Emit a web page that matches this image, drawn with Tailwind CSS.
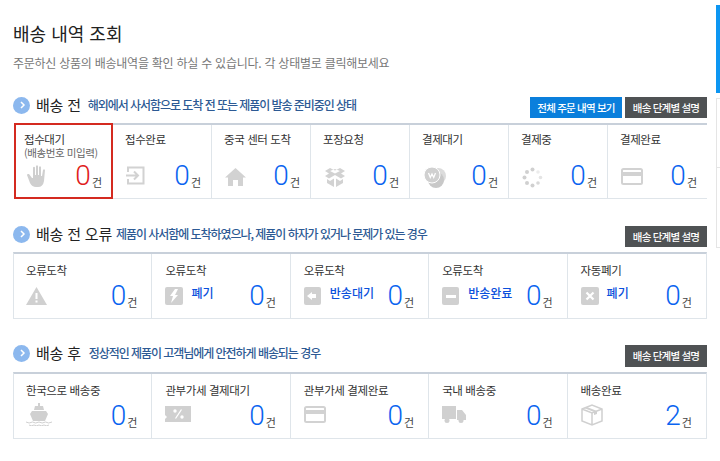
<!DOCTYPE html>
<html lang="ko"><head><meta charset="utf-8"><title>배송 내역 조회</title>
<script src="https://cdn.jsdelivr.net/npm/@tailwindcss/browser@4"></script>
</head>
<body class="bg-white overflow-hidden">
<div class="relative w-[720px] h-[461px] overflow-hidden font-['Noto_Sans_CJK_KR','Noto_Sans',sans-serif] text-[#333]">
  <div class="absolute right-0 top-[5px] w-[4px] h-[88px] bg-[#0d96f2]"></div>
  <div class="absolute right-0 top-[98px] w-[4px] h-[70px] border-l border-y border-[#e5e5e5]"></div>
  <div class="absolute right-0 top-[168px] w-[4px] h-[80px] border-l border-b border-[#e5e5e5]"></div>
  <main class="w-[707px] pl-[13px] flex flex-col">
    <h1 class="mt-[20px] text-[18px] leading-[26px] font-normal text-[#222]">배송 내역 조회</h1>
    <p class="mt-[8px] text-[12px] leading-[18px] tracking-[-0.25px] text-[#777]">주문하신 상품의 배송내역을 확인 하실 수 있습니다. 각 상태별로 클릭해보세요</p>

    <div class="mt-[21px] flex items-center h-[24px]">
      <span class="w-[17px] h-[17px] rounded-full bg-[#8cb8ee] flex items-center justify-center"><svg width="8" height="8" viewBox="0 0 8 8" fill="none" stroke="#fff" stroke-width="1.5"><path d="M3 1l3 3-3 3"/></svg></span>
      <span class="ml-[6px] text-[15px] tracking-[-0.2px] text-[#222]">배송 전</span>
      <span class="ml-[7px] text-[12px] font-medium tracking-[-1.05px] text-[#2d5a94]">해외에서 사서함으로 도착 전 또는 제품이 발송 준비중인 상태</span>
      <span class="ml-auto mt-[5px] h-[21px] w-[92px] bg-[#0a7fdc] text-white text-[10.5px] font-medium tracking-[-0.8px] flex items-center justify-center">전체 주문 내역 보기</span>
      <span class="ml-[3px] mt-[5px] h-[21px] w-[82px] bg-[#4f5254] text-white text-[10.5px] font-medium tracking-[-0.8px] flex items-center justify-center">배송 단계별 설명</span>
    </div>

    <div class="mt-[6px] ml-[1px] relative grid grid-cols-7 h-[76px] border-t-2 border-t-[#c8d0da] border-b border-b-[#dfe5ea]">
      <div class="absolute z-10 left-0 top-[-2px] w-[99px] h-[76px] border-2 border-[#d42a20]"></div>
      <div class="relative border-r border-[#dfe5ea] pl-[10px] pt-[7px]">
        <p class="text-[11.5px] leading-[15px] tracking-[-0.4px]">접수대기</p>
        <p class="text-[10.5px] leading-[12px] tracking-[-0.4px] text-[#666]">(배송번호 미입력)</p>
        <svg class="absolute left-[13px] top-[40px]" width="18" height="22" viewBox="0 0 18 22" fill="#cfcfcf"><path d="M0 10l3 8q2 4 6 4h2q5 0 6-6l1-11q-1-1.500-2 0l-1 6h-1V2q-1-1.500-2 0v8h-1V1q-1-1.500-2 0v9H8V2.500q-1-1.500-2 0V13H5l-3-4q-2-.5-2 1z"/></svg>
        <div class="absolute right-[10px] bottom-[5px] flex items-end"><span class="font-['Roboto'] font-light text-[28px] leading-[34px] text-[#e0201b]">0</span><span class="ml-[1px] mb-[4px] text-[11px] leading-[14px] text-[#444]">건</span></div>
      </div>
      <div class="relative border-r border-[#dfe5ea] pl-[12px] pt-[7px]">
        <p class="text-[11.5px] leading-[15px] tracking-[-0.4px]">접수완료</p>
        <svg class="absolute left-[13px] top-[41px]" width="19" height="19" viewBox="0 0 19 19" fill="none" stroke="#d2d2d2" stroke-width="2"><path d="M2 6V1.500h15.500v16H2V13M0 9.500h11M8 5.500l4 4-4 4"/></svg>
        <div class="absolute right-[10px] bottom-[5px] flex items-end"><span class="font-['Roboto'] font-light text-[28px] leading-[34px] text-[#0a64f0]">0</span><span class="ml-[1px] mb-[4px] text-[11px] leading-[14px] text-[#444]">건</span></div>
      </div>
      <div class="relative border-r border-[#dfe5ea] pl-[12px] pt-[7px]">
        <p class="text-[11.5px] leading-[15px] tracking-[-0.4px]">중국 센터 도착</p>
        <svg class="absolute left-[13px] top-[43px]" width="21" height="18" viewBox="0 0 21 18" fill="#d2d2d2"><path d="M10.500 0L0 9.500h3V18h5v-6h5v6h5V9.500h3z"/></svg>
        <div class="absolute right-[10px] bottom-[5px] flex items-end"><span class="font-['Roboto'] font-light text-[28px] leading-[34px] text-[#0a64f0]">0</span><span class="ml-[1px] mb-[4px] text-[11px] leading-[14px] text-[#444]">건</span></div>
      </div>
      <div class="relative border-r border-[#dfe5ea] pl-[12px] pt-[7px]">
        <p class="text-[11.5px] leading-[15px] tracking-[-0.4px]">포장요청</p>
        <svg class="absolute left-[14px] top-[43px]" width="20" height="19" viewBox="0 0 20 19" fill="#d2d2d2"><path d="M5 0l5 2.500L15 0l5 3-4 2.500 4 2.500-4 2.500-6-3.500-6 3.500L0 8l4-2.500L0 3zM5 3l5 2.500L15 3l-5-2z"/><path d="M2 11l3 2 4-2.500V19l-7-4zM18 11l-3 2-4-2.500V19l7-4z"/></svg>
        <div class="absolute right-[10px] bottom-[5px] flex items-end"><span class="font-['Roboto'] font-light text-[28px] leading-[34px] text-[#0a64f0]">0</span><span class="ml-[1px] mb-[4px] text-[11px] leading-[14px] text-[#444]">건</span></div>
      </div>
      <div class="relative border-r border-[#dfe5ea] pl-[12px] pt-[7px]">
        <p class="text-[11.5px] leading-[15px] tracking-[-0.4px]">결제대기</p>
        <svg class="absolute left-[14px] top-[42px]" width="22" height="21" viewBox="0 0 22 21"><circle cx="14" cy="9" r="8" fill="#dcdcdc"/><circle cx="12" cy="13" r="8" fill="#c8c8c8"/><circle cx="8" cy="8" r="8" fill="#d0d0d0" stroke="#fff"/><path d="M4.500 6l1.800 4.500L8 7l1.700 3.500L11.500 6" fill="none" stroke="#fff" stroke-width="1.300"/></svg>
        <div class="absolute right-[10px] bottom-[5px] flex items-end"><span class="font-['Roboto'] font-light text-[28px] leading-[34px] text-[#0a64f0]">0</span><span class="ml-[1px] mb-[4px] text-[11px] leading-[14px] text-[#444]">건</span></div>
      </div>
      <div class="relative border-r border-[#dfe5ea] pl-[12px] pt-[7px]">
        <p class="text-[11.5px] leading-[15px] tracking-[-0.4px]">결제중</p>
        <svg class="absolute left-[13px] top-[42px]" width="21" height="21" viewBox="0 0 21 21" fill="#d0d0d0"><circle cx="10.500" cy="2.500" r="2"/><circle cx="16" cy="5" r="1.800" fill="#ececec"/><circle cx="18.500" cy="10.500" r="1.800" fill="#e4e4e4"/><circle cx="16" cy="16" r="1.800" fill="#d8d8d8"/><circle cx="10.500" cy="18.500" r="2"/><circle cx="5" cy="16" r="2"/><circle cx="2.500" cy="10.500" r="2"/><circle cx="5" cy="5" r="2"/></svg>
        <div class="absolute right-[10px] bottom-[5px] flex items-end"><span class="font-['Roboto'] font-light text-[28px] leading-[34px] text-[#0a64f0]">0</span><span class="ml-[1px] mb-[4px] text-[11px] leading-[14px] text-[#444]">건</span></div>
      </div>
      <div class="relative pl-[12px] pt-[7px]">
        <p class="text-[11.5px] leading-[15px] tracking-[-0.4px]">결제완료</p>
        <svg class="absolute left-[13px] top-[43px]" width="22" height="17" viewBox="0 0 22 17"><rect x="1" y="1" width="20" height="15" rx="1.500" fill="none" stroke="#d2d2d2" stroke-width="2"/><rect x="1" y="4" width="20" height="4" fill="#d2d2d2"/></svg>
        <div class="absolute right-[10px] bottom-[5px] flex items-end"><span class="font-['Roboto'] font-light text-[28px] leading-[34px] text-[#0a64f0]">0</span><span class="ml-[1px] mb-[4px] text-[11px] leading-[14px] text-[#444]">건</span></div>
      </div>
    </div>

    <div class="mt-[23px] flex items-center h-[24px]">
      <span class="w-[17px] h-[17px] rounded-full bg-[#8cb8ee] flex items-center justify-center"><svg width="8" height="8" viewBox="0 0 8 8" fill="none" stroke="#fff" stroke-width="1.5"><path d="M3 1l3 3-3 3"/></svg></span>
      <span class="ml-[6px] text-[15px] tracking-[-0.2px] text-[#222]">배송 전 오류</span>
      <span class="ml-[4px] text-[12px] font-medium tracking-[-1.05px] text-[#2d5a94]">제품이 사서함에 도착하였으나, 제품이 하자가 있거나 문제가 있는 경우</span>
      <span class="ml-auto mt-[5px] h-[21px] w-[82px] bg-[#4f5254] text-white text-[10.5px] font-medium tracking-[-0.8px] flex items-center justify-center">배송 단계별 설명</span>
    </div>

    <div class="mt-[6px] grid grid-cols-5 h-[67px] border-x border-x-[#dfe5ea] border-t-2 border-t-[#c8d0da] border-b border-b-[#dfe5ea]">
      <div class="relative border-r border-[#dfe5ea] pl-[12px] pt-[8px]">
        <p class="text-[11.5px] leading-[16px] tracking-[-0.4px]">오류도착</p>
        <svg class="absolute left-[12px] top-[33px]" width="21" height="18" viewBox="0 0 21 18"><path d="M10.500 0L21 18H0z" fill="#d0d0d0"/><path d="M9.500 6h2v6h-2zM9.500 13.500h2v2h-2z" fill="#fff"/></svg>
        <div class="absolute right-[14px] bottom-[5px] flex items-end"><span class="font-['Roboto'] font-light text-[28px] leading-[34px] text-[#0a64f0]">0</span><span class="ml-[1px] mb-[4px] text-[11px] leading-[14px] text-[#444]">건</span></div>
      </div>
      <div class="relative border-r border-[#dfe5ea] pl-[13px] pt-[8px]">
        <p class="text-[11.5px] leading-[16px] tracking-[-0.4px]">오류도착</p>
        <div class="absolute left-[13px] top-[33px] w-[18px] h-[18px] rounded-[2px] bg-[#d0d0d0] flex items-center justify-center"><svg width="12" height="14" viewBox="0 0 12 14" fill="#fff"><path d="M7 0L2 7h3l-2 7 7-8H7l3-6z"/></svg></div>
        <span class="absolute left-[39px] top-[31px] text-[12px] leading-[16px] font-medium text-[#0a50dc]">폐기</span>
        <div class="absolute right-[14px] bottom-[5px] flex items-end"><span class="font-['Roboto'] font-light text-[28px] leading-[34px] text-[#0a64f0]">0</span><span class="ml-[1px] mb-[4px] text-[11px] leading-[14px] text-[#444]">건</span></div>
      </div>
      <div class="relative border-r border-[#dfe5ea] pl-[13px] pt-[8px]">
        <p class="text-[11.5px] leading-[16px] tracking-[-0.4px]">오류도착</p>
        <div class="absolute left-[13px] top-[33px] w-[17px] h-[18px] rounded-[2px] bg-[#d0d0d0] flex items-center justify-center"><svg width="10" height="10" viewBox="0 0 10 10" fill="#fff"><path d="M5 1v2h4v4H5v2L0 5z"/></svg></div>
        <span class="absolute left-[39px] top-[31px] text-[12px] leading-[16px] font-medium text-[#0a50dc]">반송대기</span>
        <div class="absolute right-[14px] bottom-[5px] flex items-end"><span class="font-['Roboto'] font-light text-[28px] leading-[34px] text-[#0a64f0]">0</span><span class="ml-[1px] mb-[4px] text-[11px] leading-[14px] text-[#444]">건</span></div>
      </div>
      <div class="relative border-r border-[#dfe5ea] pl-[13px] pt-[8px]">
        <p class="text-[11.5px] leading-[16px] tracking-[-0.4px]">오류도착</p>
        <div class="absolute left-[13px] top-[33px] w-[17px] h-[18px] rounded-[2px] bg-[#d0d0d0] flex items-center justify-center"><span class="w-[10px] h-[3px] bg-white"></span></div>
        <span class="absolute left-[39px] top-[31px] text-[12px] leading-[16px] font-medium text-[#0a50dc]">반송완료</span>
        <div class="absolute right-[14px] bottom-[5px] flex items-end"><span class="font-['Roboto'] font-light text-[28px] leading-[34px] text-[#0a64f0]">0</span><span class="ml-[1px] mb-[4px] text-[11px] leading-[14px] text-[#444]">건</span></div>
      </div>
      <div class="relative pl-[13px] pt-[8px]">
        <p class="text-[11.5px] leading-[16px] tracking-[-0.4px]">자동폐기</p>
        <div class="absolute left-[13px] top-[33px] w-[18px] h-[18px] rounded-[2px] bg-[#d0d0d0] flex items-center justify-center"><svg width="10" height="10" viewBox="0 0 10 10" stroke="#fff" stroke-width="2.200"><path d="M1.500 1.500l7 7M8.500 1.500l-7 7"/></svg></div>
        <span class="absolute left-[39px] top-[31px] text-[12px] leading-[16px] font-medium text-[#0a50dc]">폐기</span>
        <div class="absolute right-[14px] bottom-[5px] flex items-end"><span class="font-['Roboto'] font-light text-[28px] leading-[34px] text-[#0a64f0]">0</span><span class="ml-[1px] mb-[4px] text-[11px] leading-[14px] text-[#444]">건</span></div>
      </div>
    </div>

    <div class="mt-[22px] flex items-center h-[24px]">
      <span class="w-[17px] h-[17px] rounded-full bg-[#8cb8ee] flex items-center justify-center"><svg width="8" height="8" viewBox="0 0 8 8" fill="none" stroke="#fff" stroke-width="1.5"><path d="M3 1l3 3-3 3"/></svg></span>
      <span class="ml-[6px] text-[15px] tracking-[-0.2px] text-[#222]">배송 후</span>
      <span class="ml-[8px] text-[12px] font-medium tracking-[-1.05px] text-[#2d5a94]">정상적인 제품이 고객님에게 안전하게 배송되는 경우</span>
      <span class="ml-auto mt-[5px] h-[22px] w-[82px] bg-[#4f5254] text-white text-[10.5px] font-medium tracking-[-0.8px] flex items-center justify-center">배송 단계별 설명</span>
    </div>

    <div class="mt-[7px] grid grid-cols-5 h-[67px] border-x border-x-[#dfe5ea] border-t-2 border-t-[#c8d0da] border-b border-b-[#dfe5ea]">
      <div class="relative border-r border-[#dfe5ea] pl-[12px] pt-[8px]">
        <p class="text-[11.5px] leading-[16px] tracking-[-0.4px]">한국으로 배송중</p>
        <svg class="absolute left-[12px] top-[29px]" width="26" height="23" viewBox="0 0 26 23" fill="#d0d0d0"><path d="M12 0h2v3h-2zM9 3h8l1 4H8zM6 8h14l2 3-3 7H7l-3-7z"/><path d="M0 19q3 2 6.500 0 3 2 6.500 0 3 2 6.500 0 3 2 6.500 0M3 22q2.500 1.500 5 0 2.500 1.500 5 0 2.500 1.500 5 0 2.500 1.500 5 0" fill="none" stroke="#d0d0d0"/></svg>
        <div class="absolute right-[14px] bottom-[5px] flex items-end"><span class="font-['Roboto'] font-light text-[28px] leading-[34px] text-[#0a64f0]">0</span><span class="ml-[1px] mb-[4px] text-[11px] leading-[14px] text-[#444]">건</span></div>
      </div>
      <div class="relative border-r border-[#dfe5ea] pl-[13px] pt-[8px]">
        <p class="text-[11.5px] leading-[16px] tracking-[-0.4px]">관부가세 결제대기</p>
        <svg class="absolute left-[13px] top-[32px]" width="26" height="16" viewBox="0 0 26 16"><path d="M0 0h26v16H0v-3l2-2-2-2z" fill="#d0d0d0"/><path d="M10.500 12.500l6-9" stroke="#fff" stroke-width="1.300"/><circle cx="10" cy="5" r="1.700" fill="#fff"/><circle cx="17" cy="11" r="1.700" fill="#fff"/></svg>
        <div class="absolute right-[14px] bottom-[5px] flex items-end"><span class="font-['Roboto'] font-light text-[28px] leading-[34px] text-[#0a64f0]">0</span><span class="ml-[1px] mb-[4px] text-[11px] leading-[14px] text-[#444]">건</span></div>
      </div>
      <div class="relative border-r border-[#dfe5ea] pl-[13px] pt-[8px]">
        <p class="text-[11.5px] leading-[16px] tracking-[-0.4px]">관부가세 결제완료</p>
        <svg class="absolute left-[13px] top-[32px]" width="22" height="17" viewBox="0 0 22 17"><rect x="1" y="1" width="20" height="15" rx="1.500" fill="none" stroke="#d2d2d2" stroke-width="2"/><rect x="1" y="4" width="20" height="4" fill="#d2d2d2"/></svg>
        <div class="absolute right-[14px] bottom-[5px] flex items-end"><span class="font-['Roboto'] font-light text-[28px] leading-[34px] text-[#0a64f0]">0</span><span class="ml-[1px] mb-[4px] text-[11px] leading-[14px] text-[#444]">건</span></div>
      </div>
      <div class="relative border-r border-[#dfe5ea] pl-[13px] pt-[8px]">
        <p class="text-[11.5px] leading-[16px] tracking-[-0.4px]">국내 배송중</p>
        <svg class="absolute left-[13px] top-[32px]" width="24" height="17" viewBox="0 0 24 17" fill="#d0d0d0"><path d="M0 0h14v13H0zM15 4h5l4 5v5h-9z"/><circle cx="5" cy="14.500" r="2.500"/><circle cx="19" cy="14.500" r="2.500"/></svg>
        <div class="absolute right-[14px] bottom-[5px] flex items-end"><span class="font-['Roboto'] font-light text-[28px] leading-[34px] text-[#0a64f0]">0</span><span class="ml-[1px] mb-[4px] text-[11px] leading-[14px] text-[#444]">건</span></div>
      </div>
      <div class="relative pl-[13px] pt-[8px]">
        <p class="text-[11.5px] leading-[16px] tracking-[-0.4px]">배송완료</p>
        <svg class="absolute left-[13px] top-[30px]" width="22" height="22" viewBox="0 0 22 22" fill="none" stroke="#d0d0d0" stroke-width="1.500"><path d="M1 5l10-4 10 4v12l-10 4-10-4zM1 5l10 4 10-4M11 9v12"/><path d="M6 3l10 4v3l-3 1V8L3 4z" fill="#d0d0d0" stroke="none"/></svg>
        <div class="absolute right-[14px] bottom-[5px] flex items-end"><span class="font-['Roboto'] font-light text-[28px] leading-[34px] text-[#0a64f0]">2</span><span class="ml-[1px] mb-[4px] text-[11px] leading-[14px] text-[#444]">건</span></div>
      </div>
    </div>
  </main>
</div>
</body></html>
